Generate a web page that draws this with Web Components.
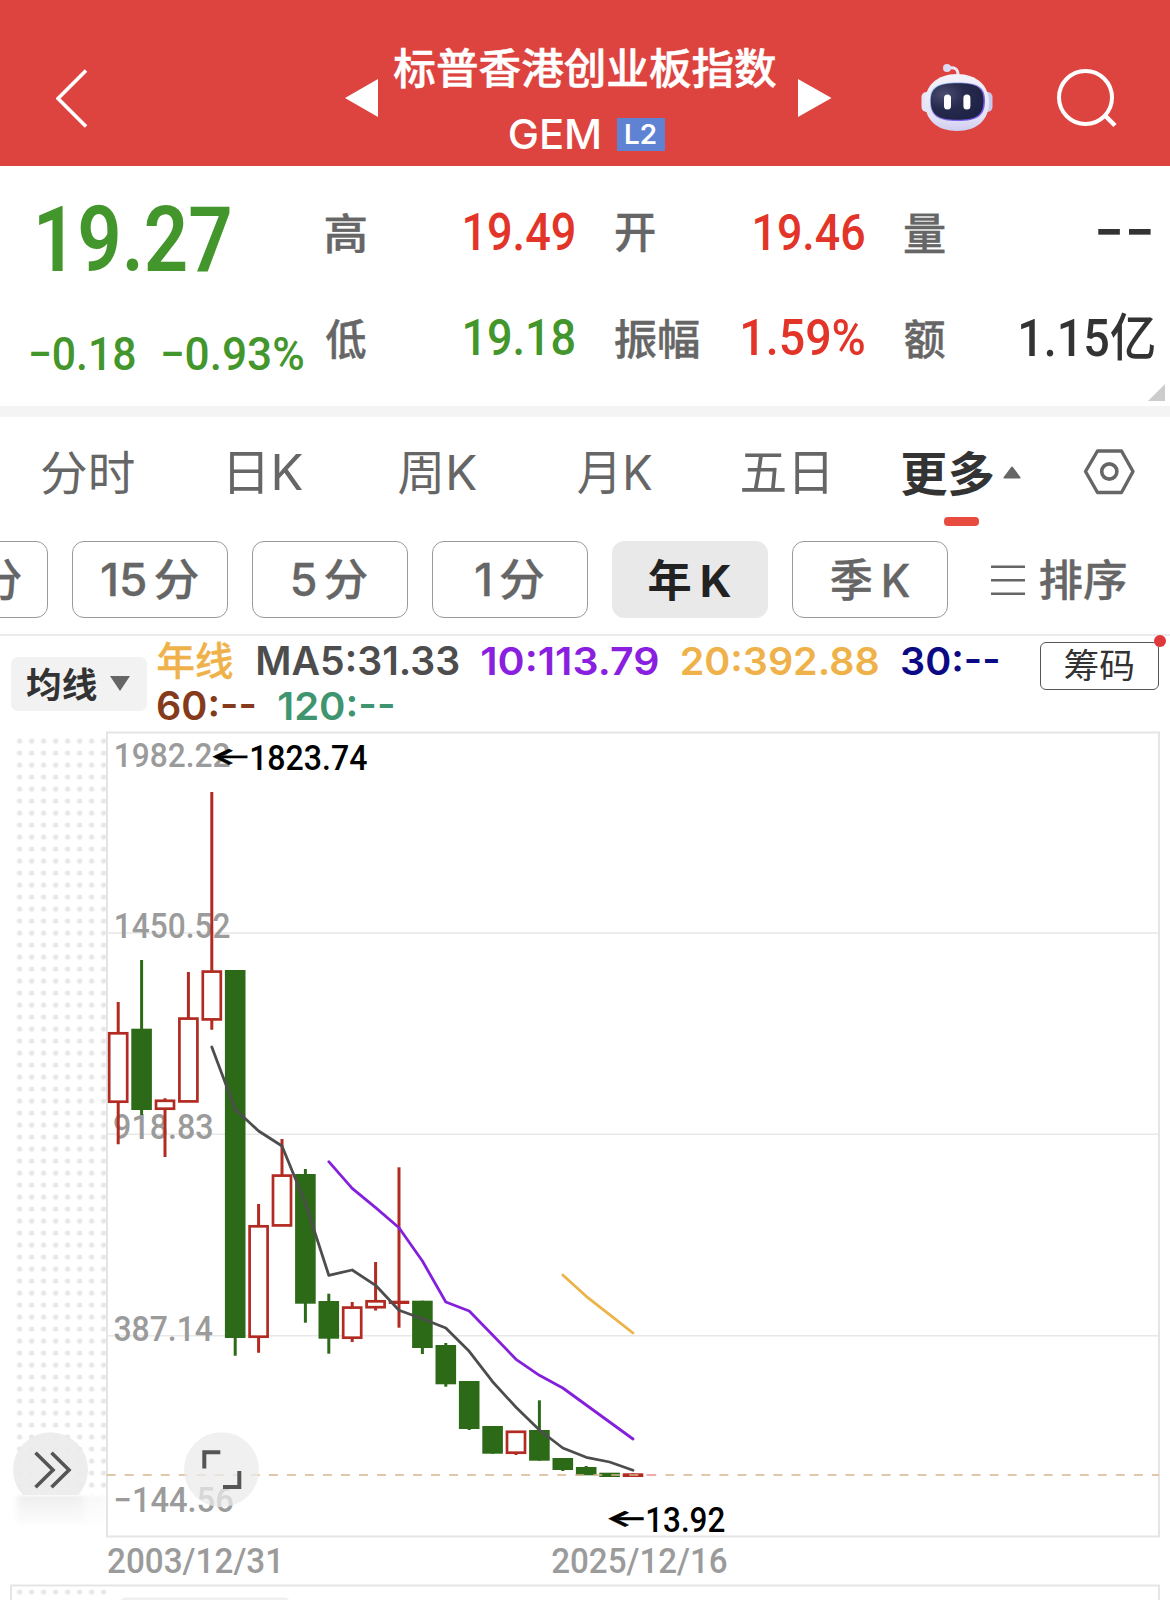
<!DOCTYPE html>
<html lang="zh-CN">
<head>
<meta charset="utf-8">
<title>标普香港创业板指数 GEM</title>
<style>
html,body{margin:0;padding:0;background:#fff}
body{width:1170px;height:1600px;overflow:hidden}
</style>
</head>
<body>
<quote-app></quote-app>
<script>
const FONTS = {
  din: '"Roboto","Noto Sans CJK SC",sans-serif',
  ui: '"Inter","Noto Sans CJK SC",sans-serif'
};
const ctx = document.createElement('canvas').getContext('2d');

/* Returns an SVG <text> whose ink fills a w x h box placed at (x, y). */
function fitText(text, x, y, w, h, o = {}) {
  const font = FONTS[o.font || 'ui'], weight = o.weight || 400, gap = o.gap || 0;
  const parts = gap ? text.match(/[\x00-\x7f]+|[^\x00-\x7f]+/g) : [text];
  ctx.font = `${weight} 200px ${font}`;
  let adv = 0, left = 0, right = 0, asc = -1e9, desc = -1e9;
  parts.forEach((p, i) => {
    const m = ctx.measureText(p);
    if (i === 0) left = -m.actualBoundingBoxLeft;
    right = adv + m.actualBoundingBoxRight;
    adv += m.width;
    asc = Math.max(asc, m.actualBoundingBoxAscent);
    desc = Math.max(desc, m.actualBoundingBoxDescent);
  });
  const size = o.size || 200 * h / (asc + desc);
  const k = size / 200;
  const base = o.size ? h : asc * k;
  const sx = (w - gap) / ((right - left) * k);
  const body = parts.map((p, i) => i ? `<tspan dx="${(gap / sx).toFixed(2)}">${p}</tspan>` : `<tspan>${p}</tspan>`).join('');
  const stroke = o.stroke ? ` stroke="${o.fill || 'currentColor'}" stroke-width="${o.stroke}"` : '';
  return `<text xml:space="preserve" transform="translate(${(x - left * k * sx).toFixed(2)} ${(y + base).toFixed(2)}) scale(${sx.toFixed(4)} 1)" font-family='${font}' font-weight="${weight}" font-size="${size.toFixed(2)}" fill="${o.fill || 'currentColor'}"${stroke}>${body}</text>`;
}

class FitText extends HTMLElement {
  connectedCallback() {
    const n = a => parseFloat(this.getAttribute(a)) || 0;
    const w = n('w'), h = n('h');
    this.attachShadow({mode: 'open'}).innerHTML = `
      <style>:host{display:block;flex:none;width:${w}px;height:${h}px;margin:${n('mt')}px 0 0 ${n('ml')}px}
      svg{display:block;overflow:visible}</style>
      <svg width="${w}" height="${h}">${fitText(this.getAttribute('text'), 0, 0, w, h, {
        font: this.getAttribute('font'), weight: this.getAttribute('weight'), size: n('size'), gap: n('gap'), stroke: n('stroke')})}</svg>`;
  }
}
customElements.define('fit-text', FitText);

function define(name, html) {
  const t = document.createElement('template');
  t.innerHTML = html;
  customElements.define(name, class extends HTMLElement {
    constructor() { super(); this.attachShadow({mode: 'open'}).append(t.content.cloneNode(true)); }
  });
}

define('robot-icon', `
<style>:host{display:block;flex:none;width:73px;height:68px}svg{display:block}</style>
<svg width="73" height="68" viewBox="921 63 73 68">
  <defs>
    <linearGradient id="h" x1="0" y1="0" x2="0" y2="1"><stop offset="0" stop-color="#f4f3fb"/><stop offset=".75" stop-color="#e3e2f5"/><stop offset="1" stop-color="#cfcdf0"/></linearGradient>
    <linearGradient id="r" x1="0" y1="0" x2="1" y2="1"><stop offset="0" stop-color="#8fdcf0"/><stop offset=".45" stop-color="#8c7be8"/><stop offset="1" stop-color="#6a4bea"/></linearGradient>
    <radialGradient id="f" cx=".25" cy=".3" r=".8"><stop offset="0" stop-color="#4a4d70"/><stop offset=".5" stop-color="#262a4c"/><stop offset="1" stop-color="#1e2246"/></radialGradient>
  </defs>
  <path d="M958 75c0-6-3-8-9-7" fill="none" stroke="#e9e6f5" stroke-width="3"/>
  <circle cx="947" cy="68" r="4" fill="#dcdaf2"/>
  <rect x="921.500" y="92" width="14" height="20" rx="5" fill="#e6e5f7"/>
  <rect x="978.500" y="92" width="14" height="20" rx="5" fill="#cac7ee"/>
  <path d="M957 74c20 0 32 12 32 28 0 18-12 29-32 29s-32-11-32-29c0-16 12-28 32-28z" fill="url(#h)"/>
  <path d="M957.500 82.500c21 0 27.500 5 27.500 18 0 15-7 20.500-27.500 20.500S930 115.500 930 100.500c0-13 6.500-18 27.500-18z" fill="url(#r)"/>
  <path d="M957.300 83.300c20.500 0 26.200 5 26.200 17.200 0 14-6.500 19.300-26.200 19.300s-26.500-5.300-26.500-19.300c0-12.200 6.500-17.200 26.500-17.200z" fill="url(#f)"/>
  <rect x="944" y="94.500" width="7" height="15" rx="3.500" fill="#fff"/>
  <rect x="963.400" y="94.500" width="7" height="15" rx="3.500" fill="#fff"/>
</svg>`);

define('app-header', `
<style>
:host{display:flex;align-items:flex-start;height:166px;background:#dd4440;color:#fff}
svg{display:block;flex:none}
.t{width:382px;margin:48px 0 0 16px}
.r{display:flex}
.b{display:block;margin:5px 0 0 17.500px;width:48px;height:33.500px;background:#5f82d3}
</style>
<svg style="margin:69px 0 0 56px" width="32" height="59"><path d="M30 1.500 2 29.500 30 57.500" fill="none" stroke="#fff" stroke-width="3.600"/></svg>
<svg style="margin:79px 0 0 257px" width="33" height="38"><path d="M0 19 33 0V38z" fill="#fff"/></svg>
<div class="t">
  <fit-text text="标普香港创业板指数" weight="500" stroke=".5" w="382" h="39.500"></fit-text>
  <div class="r" style="margin-top:25px"><fit-text text="GEM" weight="500" ml="116" mt="5" w="89" h="31"></fit-text>
  <span class="b"><fit-text text="L2" weight="600" ml="9.500" mt="6.500" w="29.500" h="19.500"></fit-text></span></div>
</div>
<svg style="margin:79px 0 0 22px" width="33.500" height="38"><path d="M33.500 19 0 0V38z" fill="#fff"/></svg>
<robot-icon style="margin:63px 0 0 89px"></robot-icon>
<svg style="margin:67px 0 0 62px" width="62" height="62"><circle cx="29.500" cy="30.500" r="26.500" fill="none" stroke="#fff" stroke-width="4"/><path d="M48 47.500 59 58.500" stroke="#fff" stroke-width="4.500"/></svg>`);

define('quote-panel', `
<style>
:host{display:flex;height:240px;border-bottom:11.500px solid #f4f4f4;position:relative}
.l{width:325.500px;color:#43962b;flex:none}
.g{display:grid;grid-template-columns:248.500px 248.800px 248.800px;grid-template-rows:40px 40px;column-gap:41px;row-gap:65.700px;padding-top:46.500px}
.g>div{display:flex;justify-content:space-between;align-items:flex-start;color:#666}
.u{color:#e23428}.d{color:#43962b}.k{color:#333}
svg{position:absolute;right:5px;bottom:5px}
</style>
<div class="l"><fit-text font="din" weight="600" text="19.27" ml="38.500" mt="38.500" w="190.500" h="66"></fit-text>
<div style="display:flex"><fit-text font="din" weight="500" text="−0.18" ml="30.600" mt="66.500" w="103.500" h="33.700"></fit-text><fit-text font="din" weight="500" text="−0.93%" ml="29" mt="66.500" w="140" h="33.700"></fit-text></div></div>
<div class="g">
<div><fit-text weight="500" stroke=".4" text="高" w="39.500" h="39.500" ml=".5" mt=".5"></fit-text><fit-text class="u" font="din" weight="500" text="19.49" w="109" h="37.300"></fit-text></div>
<div><fit-text weight="500" stroke=".4" text="开" w="38.500" h="38" ml=".5" mt="1.500"></fit-text><fit-text class="u" font="din" weight="500" text="19.46" w="109" h="37.300"></fit-text></div>
<div><fit-text weight="500" stroke=".4" text="量" w="39.500" h="39.500" mt=".5"></fit-text><fit-text class="k" font="ui" weight="600" text="--" w="52.800" h="4.500" size="54" mt="30" style="margin-right:3px"></fit-text></div>
<div><fit-text weight="500" stroke=".4" text="低" w="39.500" h="40" ml=".3" mt=".5"></fit-text><fit-text class="d" font="din" weight="500" text="19.18" w="109" h="37.300"></fit-text></div>
<div><fit-text weight="500" stroke=".4" text="振幅" w="83.400" h="40" ml=".3" mt=".5"></fit-text><fit-text class="u" font="din" weight="500" text="1.59%" w="121" h="37.300"></fit-text></div>
<div><fit-text weight="500" stroke=".4" text="额" w="39.700" h="40" ml=".3" mt=".5"></fit-text><fit-text class="k" font="din" weight="500" text="1.15亿" w="133" h="47.300" mt="-5.600"></fit-text></div>
</div>
<svg width="17" height="17"><path d="M17 0V17H0z" fill="#ccc"/></svg>`);

define('period-tabs', `
<style>
:host{display:flex;align-items:flex-start;height:123.500px;color:#666}
.m{width:119px;height:110px;margin:32.500px 0 0 75.500px;color:#333}
.a{display:flex}
.bar{width:35px;height:9px;border-radius:4px;background:#e74c3f;margin:22px 0 0 42px}
svg{display:block;flex:none}
</style>
<fit-text text="分时" ml="41.800" mt="33.600" w="91.700" h="43.500"></fit-text>
<fit-text text="日K" ml="96.500" mt="35.200" w="72" h="41.800"></fit-text>
<fit-text text="周K" ml="97.500" mt="35.200" w="77" h="41.800"></fit-text>
<fit-text text="月K" ml="101.900" mt="35.200" w="73.400" h="41.800"></fit-text>
<fit-text text="五日" ml="90.100" mt="35.200" w="84.800" h="41.800"></fit-text>
<div class="m"><div class="a"><fit-text text="更多" weight="700" w="91" h="45"></fit-text><svg style="margin:16px 0 0 10.200px" width="18" height="13"><path d="M9 1.500 16.500 11.500H1.500z" fill="#666" stroke="#666" stroke-width="2" stroke-linejoin="round"/></svg></div><div class="bar"></div></div>
<svg style="margin:31px 0 0 61.500px" width="53" height="48"><path d="M14.500 3H38.500L50 23.500 38.500 44.500H14.500L2.500 23.500z" fill="none" stroke="#666" stroke-width="3.400" stroke-linejoin="round"/><circle cx="26.300" cy="23.500" r="7.600" fill="none" stroke="#666" stroke-width="3.600"/></svg>`);

define('pill-button', `
<style>:host{display:flex;flex:none;align-items:center;justify-content:center;box-sizing:border-box;width:156px;height:77.500px;padding-top:1px;border:1.500px solid #999;border-radius:12px;color:#666}
:host([active]){background:#e9e9e9;border-color:#e9e9e9;color:#222}</style><slot></slot>`);

define('pill-row', `
<style>
:host{display:flex;align-items:flex-start;gap:24px;height:93px;border-bottom:2px solid #ebebeb;overflow:hidden}
pill-button:first-of-type{margin-left:-108px}
.s{display:flex;color:#666}
svg{display:block}
</style>
<pill-button><fit-text weight="500" stroke=".3" text="30分" gap="6" w="101" h="42"></fit-text></pill-button>
<pill-button><fit-text weight="500" stroke=".3" text="15分" gap="6" w="96" h="41.500"></fit-text></pill-button>
<pill-button><fit-text weight="500" stroke=".3" text="5分" gap="6" w="74" h="41.500"></fit-text></pill-button>
<pill-button><fit-text weight="500" stroke=".3" text="1分" gap="6" w="67.500" h="41.500"></fit-text></pill-button>
<pill-button active><fit-text weight="700" text="年K" gap="8" w="81.400" h="42"></fit-text></pill-button>
<pill-button><fit-text weight="500" stroke=".3" text="季K" gap="8" w="78.500" h="42"></fit-text></pill-button>
<div class="s"><svg style="margin:24px 0 0 19px" width="34" height="31"><path d="M0 1.800H34M0 15.300H34M0 28.800H34" stroke="#666" stroke-width="2.600"/></svg><fit-text weight="500" stroke=".3" text="排序" ml="14.500" mt="18.500" w="85.500" h="41.500"></fit-text></div>`);

define('ma-bar', `
<style>
:host{display:flex;align-items:flex-start;height:94px}
.sel{display:flex;box-sizing:border-box;width:136.300px;height:54px;margin:21px 0 0 10.700px;border-radius:7px;background:#f2f2f2;color:#333}
svg{display:block}
.v{width:840px;margin:1px 0 0 10.700px}
.v>div{display:flex;align-items:flex-start}
.chip{box-sizing:border-box;width:119px;height:48px;margin:6px 0 0 42px;border:1.500px solid #555;border-radius:6px;color:#333;position:relative}
.dot{position:absolute;right:-8px;top:-7.500px;width:12px;height:12px;border-radius:50%;background:#e0393c}
</style>
<div class="sel"><fit-text text="均线" weight="700" ml="16.500" mt="11" w="69.500" h="33.500"></fit-text><svg style="margin:19px 0 0 13.500px" width="20" height="15"><path d="M0 0H20L10 15z" fill="#666"/></svg></div>
<div class="v">
<div style="height:48px">
<fit-text style="color:#efb24a" text="年线" weight="500" stroke=".4" mt="5.500" w="74.200" h="36"></fit-text>
<fit-text style="color:#4d4d4d" text="MA5:31.33" weight="600" ml="26.100" mt="9.200" w="200.500" h="29"></fit-text>
<fit-text style="color:#8a1fe0" text="10:113.79" weight="600" ml="23.500" mt="9.200" w="175.500" h="29"></fit-text>
<fit-text style="color:#efb24a" text="20:392.88" weight="600" ml="24.200" mt="9.200" w="195.800" h="29"></fit-text>
<fit-text style="color:#0b0a84" text="30:--" weight="600" ml="25" mt="9.200" w="96" h="29"></fit-text>
</div><div style="margin-top:6px">
<fit-text style="color:#843a1b" text="60:--" weight="600" w="96.300" h="29"></fit-text>
<fit-text style="color:#3f956f" text="120:--" weight="600" ml="25" w="114" h="29"></fit-text>
</div></div>
<div class="chip"><fit-text text="筹码" ml="24" mt="6.800" w="68" h="32"></fit-text><i class="dot"></i></div>`);

const candles = [ /* kind, open/close edges, high, low */
['r',1032,1103,1002,1144.3],['g',1028.7,1110,960,1115],['r',1099.5,1110,1098.3,1157],['r',1017.3,1102.7,972,1102],
['r',970.3,1020.7,792,1029.7],['g',970,1338,970,1355.7],['r',1225,1338,1204,1352.7],['r',1174.3,1226.7,1139,1226],
['g',1174,1303.7,1169,1322.7],['g',1301,1338.7,1293.7,1353.7],['r',1306.3,1339,1302,1342],['r',1300,1308.5,1262,1310.5],
['f',1300.7,1304,1167.3,1327.7],['g',1300.7,1348,1300.7,1354],['g',1345,1384.3,1343,1386.7],['g',1381,1429,1381,1430],
['g',1426,1453.7,1426,1453.7],['r',1430.5,1454,1431,1455],['g',1430,1460.7,1400.3,1460.7],['g',1458,1470,1458,1471],
['g',1467,1475.3,1466,1475],['g',1472.7,1477,1473,1477],['f',1473.3,1477,1473.3,1477]];
const ma5 = [1047,1109.3,1131,1146,1203.3,1275.3,1270,1285.3,1310.3,1318.7,1328,1351.3,1381.7,1407.3,1430,1448,1457.3,1462,1470.3];
const ma10 = [1161.7,1188.3,1207.7,1227.7,1261,1302,1311,1335,1359.3,1375.3,1388,1405,1422,1439];
const ma20 = [1275,1296.3,1314.7,1333];

class KlineChart extends HTMLElement {
  connectedCallback() {
    const cx = i => 118.2 + i * 23.4;
    const line = (v, from, c) => `<polyline points="${v.map((y, i) => (cx(i + from)).toFixed(1) + ',' + y).join(' ')}" fill="none" stroke="${c}" stroke-width="2.800" stroke-linecap="round" stroke-linejoin="round"/>`;
    const bars = candles.map(([k, t, b, hi, lo], i) => {
      const x = cx(i), c = k === 'g' ? '#2c6a18' : '#b12b22';
      if (k === 'r') return `<path d="M${x} ${hi}V${t + 1}M${x} ${b - 1}V${Math.max(lo, b - 1)}" stroke="${c}" stroke-width="3"/><rect x="${x - 9}" y="${t + 1.3}" width="18" height="${b - t - 2.6}" fill="#fff" stroke="${c}" stroke-width="2.700"/>`;
      return `<path d="M${x} ${hi}V${lo}" stroke="${c}" stroke-width="3"/><rect x="${x - 10.3}" y="${t}" width="20.600" height="${b - t}" fill="${c}"/>`;
    }).join('');
    const g = {font: 'din', weight: 500, fill: '#9b9b9b'}, k = {font: 'din', weight: 500, fill: '#000'};
    const arrow = {weight: 600, fill: '#000', stroke: .5};
    this.attachShadow({mode: 'open'}).innerHTML = `
<style>:host{display:block;height:870px}svg{display:block}</style>
<svg width="1170" height="870" viewBox="0 730 1170 870">
<defs>
<pattern id="p" x="13.600" y="735" width="12" height="12" patternUnits="userSpaceOnUse"><circle cx="6" cy="6" r="2.600" fill="#e7e7e7"/></pattern>
<linearGradient id="fade" x1="0" y1="0" x2="0" y2="1"><stop offset="0" stop-color="#eee"/><stop offset="1" stop-color="#eee" stop-opacity="0"/></linearGradient>
<filter id="b" x="-10%" y="-20%" width="120%" height="140%"><feGaussianBlur stdDeviation="3 1"/></filter>
<clipPath id="c"><rect x="0" y="1400" width="107" height="95"/></clipPath>
</defs>
<rect x="14" y="735" width="93" height="760" fill="url(#p)"/>
<rect x="17" y="1496" width="66" height="32" fill="url(#fade)" filter="url(#b)"/>
<rect x="80" y="1496" width="26" height="32" fill="url(#fade)" opacity=".4" filter="url(#b)"/>
<path d="M107 933H1159M107 1134.300H1159M107 1335.700H1159" stroke="#e8e8e8" stroke-width="1.500"/>
<rect x="107" y="732.500" width="1052" height="804" fill="none" stroke="#e5e5e5" stroke-width="2"/>
${fitText('1982.22', 116.3, 742, 113.2, 25, g)}
${fitText('1450.52', 116.3, 913.2, 113.2, 25.3, g)}
${fitText('918.83', 114.5, 1114.5, 97.5, 25.3, g)}
${fitText('387.14', 114.5, 1316, 97.7, 25.2, g)}
${fitText('−144.56', 116, 1487.2, 116.5, 25.5, g)}
${bars}
${line(ma5, 4, '#4d4d4d')}${line(ma10, 9, '#8420dc')}${line(ma20, 19, '#ecb348')}
<path d="M106.700 1475H1159" stroke="#d6b88e" stroke-width="1.700" stroke-dasharray="9 9.020"/>
<path d="M646.500 1475H655.500" stroke="#f2a3a3" stroke-width="1.700"/>
${fitText('←', 213, 749.5, 34, 15.5, arrow)}
${fitText('1823.74', 251.7, 744.7, 115, 26, k)}
${fitText('←', 608.7, 1511.5, 34.5, 15.5, arrow)}
${fitText('13.92', 647.7, 1506.7, 76.6, 26, k)}
${fitText('2003/12/31', 108.3, 1546.5, 169.5, 26, {...g, size: 36})}
${fitText('2025/12/16', 552.5, 1546.5, 174, 26, {...g, size: 36})}
<circle cx="50.500" cy="1469.700" r="37.500" fill="#ebebeb" fill-opacity=".9" clip-path="url(#c)"/>
<path d="M35.500 1452.700 53 1470 35.500 1487.300M51.500 1452.700 69 1470 51.500 1487.300" fill="none" stroke="#555" stroke-width="3.600"/>
<circle cx="221.500" cy="1469.700" r="37.500" fill="#ebebeb" fill-opacity=".75"/>
<path d="M204.300 1468.500V1452.300H220.300M239.300 1471V1487H223" fill="none" stroke="#555" stroke-width="4"/>
<path d="M11 1600V1585.500H1159V1600" fill="none" stroke="#e5e5e5" stroke-width="2"/>
<rect x="14" y="1588" width="93" height="12" fill="url(#p)" transform="translate(0 -1)"/>
<rect x="120" y="1597.500" width="170" height="10" rx="6" fill="#f0f0f0"/>
</svg>`;
  }
}
customElements.define('kline-chart', KlineChart);

define('quote-app', `
<style>:host{display:flex;flex-direction:column;width:1170px;height:1600px;background:#fff;overflow:hidden}
:host>*{flex:none}</style>
<app-header></app-header><quote-panel></quote-panel><period-tabs></period-tabs><pill-row></pill-row><ma-bar></ma-bar><kline-chart></kline-chart>`);
</script>
</body>
</html>
